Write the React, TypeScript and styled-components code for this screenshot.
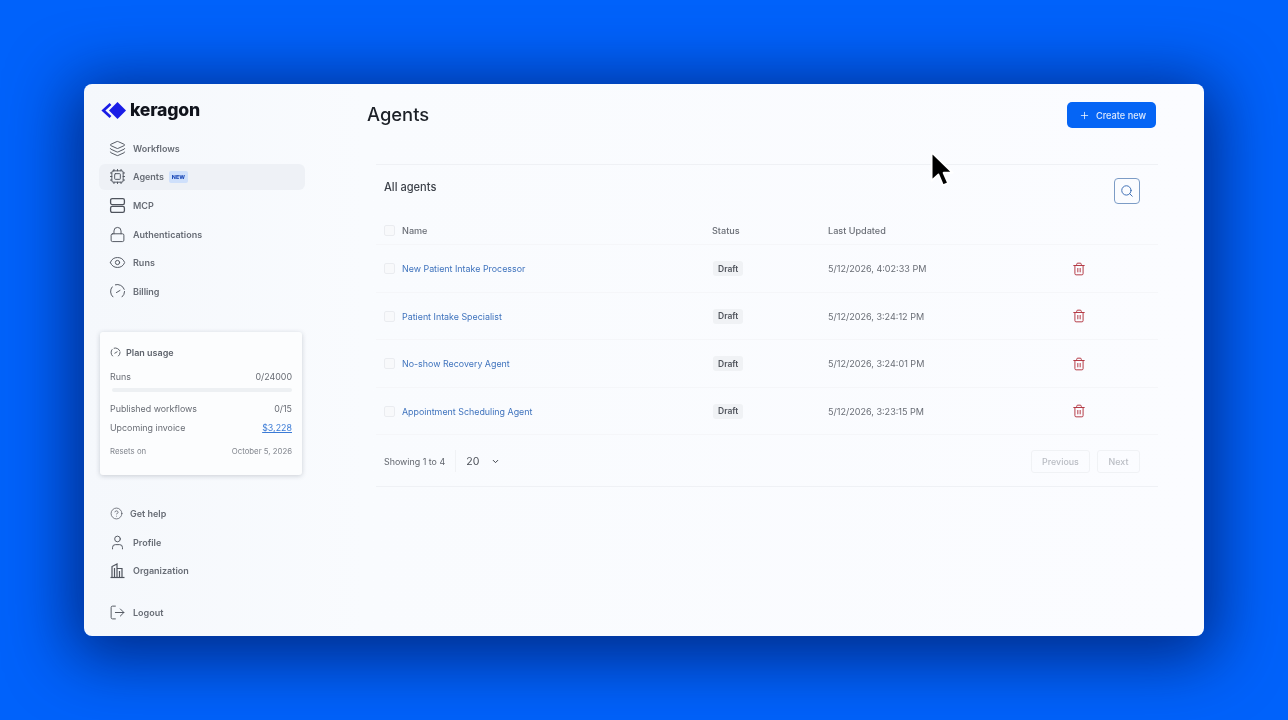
import React from 'react';
import styled, { createGlobalStyle } from 'styled-components';
import {
  ChevronDown,
  CircleHelp,
  Cpu,
  Eye,
  Layers,
  Lock,
  LogOut,
  Plus,
  Search,
  Trash2,
  User,
} from 'lucide-react';

const GlobalStyle = createGlobalStyle`
  html, body {
    margin: 0;
    padding: 0;
    height: 100%;
    background: #0062fb;
    font-family: Inter, "Liberation Sans", sans-serif;
    overflow: hidden;
  }
`;

const Stage = styled.div`
  position: relative;
  width: 1288px;
  height: 720px;
  display: flex;
  align-items: center;
  justify-content: center;
  background: #0062fb;
`;

const Window = styled.div`
  width: 1120px;
  height: 552px;
  display: flex;
  border-radius: 8px;
  overflow: hidden;
  background: linear-gradient(90deg, #f5f8fc 0%, #f9fbfe 25%, #fbfcff 100%);
  box-shadow: 0 10px 64px 12px rgba(0, 22, 90, 0.72);
`;

const Sidebar = styled.aside`
  width: 240px;
  flex: none;
  box-sizing: border-box;
  padding: 16px 19px 0 15px;
  display: flex;
  flex-direction: column;
  filter: blur(0.3px);
`;

const LogoRow = styled.div`
  height: 20px;
  display: flex;
  align-items: center;
  gap: 4px;
  padding-left: 2px;
`;

const LogoText = styled.span`
  margin-top: -2px;
  font-size: 17.6px;
  font-weight: 800;
  color: #10131c;
  letter-spacing: -0.2px;
`;

const Nav = styled.nav<{ $top: number }>`
  display: flex;
  flex-direction: column;
  gap: 2.6px;
  margin-top: ${p => p.$top}px;
`;

const NavItem = styled.a<{ $active?: boolean; $tight?: boolean }>`
  height: 26px;
  display: flex;
  align-items: center;
  gap: 7px;
  padding-left: ${p => (p.$tight ? 11 : 10)}px;
  border-radius: 6px;
  font-size: 9px;
  font-weight: 600;
  color: #676c75;
  background: ${p => (p.$active ? '#eef1f6' : 'transparent')};

  svg {
    flex: none;
    color: #4f545d;
  }
`;

const NewBadge = styled.span`
  width: 19px;
  height: 12px;
  margin-left: -2px;
  display: flex;
  align-items: center;
  justify-content: center;
  border-radius: 2px;
  background: #cfe0fb;
  color: #1d4ab8;
  font-size: 5.4px;
  font-weight: 800;
`;

const PlanCard = styled.section`
  width: 202px;
  height: 143px;
  box-sizing: border-box;
  margin: 27.6px 0 0 1px;
  padding: 15px 10px 0;
  border-radius: 3px;
  background: #fcfdfe;
  box-shadow: 0 1px 5px rgba(40, 50, 70, 0.22);
`;

const PlanTitle = styled.div`
  display: flex;
  align-items: center;
  gap: 5px;
  height: 12px;
  font-size: 9px;
  font-weight: 600;
  color: #5f646d;

  svg {
    color: #4f545d;
  }
`;

const PlanRow = styled.div<{ $top: number; $small?: boolean }>`
  display: flex;
  align-items: center;
  justify-content: space-between;
  height: 12px;
  margin-top: ${p => p.$top}px;
  font-size: ${p => (p.$small ? 7.8 : 8.9)}px;
  color: ${p => (p.$small ? '#82868e' : '#686c74')};
`;

const UsageBar = styled.div`
  height: 4px;
  margin: 5px 0 0 2px;
  border-radius: 2px;
  background: #edf0f3;
`;

const InvoiceLink = styled.span`
  color: #3b7bd6;
  text-decoration: underline;
`;

const Main = styled.main`
  flex: 1;
  min-width: 0;
  box-sizing: border-box;
  padding: 18px 48px 0 43px;
  filter: blur(0.3px);
`;

const PageHeader = styled.header`
  height: 26px;
  display: flex;
  align-items: center;
  justify-content: space-between;
`;

const PageTitle = styled.h1`
  margin: -2px 0 0;
  font-size: 18.4px;
  font-weight: 500;
  color: #1c2027;
`;

const CreateButton = styled.button`
  width: 89px;
  height: 26px;
  display: flex;
  align-items: center;
  justify-content: center;
  gap: 6px;
  padding: 0 0 0 2px;
  border: none;
  border-radius: 5px;
  background: #0565f5;
  color: #dbe8fd;
  font-family: inherit;
  font-size: 9.2px;
  font-weight: 500;

  svg {
    color: #fff;
  }
`;

const AgentsCard = styled.section`
  height: 323px;
  box-sizing: border-box;
  margin: 36px -2px 0 9px;
  border-top: 1px solid #eff1f5;
  border-bottom: 1px solid #eff1f5;
`;

const CardHeader = styled.div`
  display: flex;
  align-items: center;
  justify-content: space-between;
  padding: 13px 18px 13px 8px;
`;

const CardTitle = styled.h2`
  margin: 0 0 8px;
  font-size: 11.1px;
  font-weight: 500;
  color: #3e434b;
`;

const SearchButton = styled.button`
  width: 26px;
  height: 26px;
  display: flex;
  align-items: center;
  justify-content: center;
  padding: 0;
  border: 1px solid #7c9cc6;
  border-radius: 4px;
  background: transparent;
  color: #3f6fb5;
`;

const Row = styled.div<{ $head?: boolean }>`
  display: grid;
  grid-template-columns: 18px 310px 116px 244px 14px;
  align-items: center;
  height: ${p => (p.$head ? '28px' : '47.5px')};
  box-sizing: border-box;
  padding: ${p => (p.$head ? '0' : '1px')} 0 0 8px;
  border-bottom: 1px solid #f5f6f9;
  font-size: ${p => (p.$head ? 9.1 : 8.9)}px;
  color: #6a6e76;
  font-weight: ${p => (p.$head ? 500 : 400)};
`;

const Checkbox = styled.span`
  width: 9px;
  height: 9px;
  border: 1px solid #eaecf0;
  border-radius: 2px;
  background: #f8f9fb;
`;

const AgentName = styled.a`
  color: #3f73bd;
`;

const DraftBadge = styled.span`
  justify-self: start;
  margin-left: 1px;
  padding: 2.5px 5px;
  border-radius: 3px;
  background: #f0f2f5;
  color: #51555d;
  font-size: 8.5px;
  line-height: 10px;
  font-weight: 600;
`;

const UpdatedAt = styled.span`
  font-size: 9.05px;
`;

const DeleteIcon = styled(Trash2)`
  color: #b43a45;
`;

const Footer = styled.div`
  height: 51px;
  display: flex;
  align-items: center;
  box-sizing: border-box;
  padding: 1px 18px 0 8px;
  font-size: 8.9px;
  color: #62666e;
`;

const PageSize = styled.div`
  display: flex;
  align-items: center;
  gap: 12px;
  height: 22px;
  margin-left: 10px;
  padding-left: 10px;
  border-left: 1px solid #f0f2f5;
  font-size: 10.6px;
  color: #4c5058;

  svg {
    color: #3b3f47;
  }
`;

const Pager = styled.div`
  display: flex;
  gap: 7px;
  margin-left: auto;
`;

const PagerButton = styled.button<{ $width: number }>`
  width: ${p => p.$width}px;
  height: 23px;
  padding: 0;
  border: 1px solid #f0f2f5;
  border-radius: 3px;
  background: transparent;
  color: #b9bcc3;
  font-family: inherit;
  font-size: 8.9px;
  font-weight: 500;
`;

// sits over the page, it was part of the recording
const Cursor = styled.svg`
  position: absolute;
  left: 929px;
  top: 150px;
`;

const LogoMark = () => (
  <svg width="25" height="17" viewBox="0 0 25 17" fill="#1a1de6">
    <path d="M8.6 1 L0.4 8.5 L8.6 16 L10.4 14 L4.4 8.5 L10.4 3 Z" />
    <path d="M16.5 0 L25 8.5 L16.5 17 L8 8.5 Z" />
  </svg>
);

const McpIcon = () => (
  <svg width="17" height="17" viewBox="0 0 17 17" fill="none" stroke="currentColor" strokeWidth="1.3">
    <rect x="1.6" y="1.6" width="13.8" height="6" rx="1.6" />
    <rect x="1.6" y="9.4" width="13.8" height="6" rx="1.6" />
  </svg>
);

const GaugeIcon = ({ size, stroke }: { size: number; stroke: number }) => (
  <svg width={size} height={size} viewBox="0 0 24 24" fill="none" stroke="currentColor" strokeWidth={stroke} strokeLinecap="round">
    <path d="M9 2.5 A10 10 0 0 1 21.5 9" />
    <path d="M22 12 A10 10 0 0 1 18.5 19.6" />
    <path d="M5.5 19.6 A10 10 0 0 1 4.5 5.5" />
    <path d="M10.5 13.5 L15.5 10.5" />
  </svg>
);

const OrgIcon = () => (
  <svg width="17" height="17" viewBox="0 0 17 17" fill="none" stroke="currentColor" strokeWidth="1.2">
    <path d="M1.5 15.5 H15.5" />
    <path d="M3 15.5 V4.5 L8 2 V15.5" />
    <path d="M8 6.5 H13 V15.5" />
    <path d="M5.5 6 V15.5 M10.5 9 V15.5" />
  </svg>
);

const CursorIcon = () => (
  <Cursor width="28" height="41" viewBox="0 0 24 36">
    <path d="M2 2 V27 L8 21.5 L12 31 L16.5 29 L12.5 20 H20.5 Z" fill="#000" stroke="#fff" strokeWidth="1.6" strokeLinejoin="round" />
  </Cursor>
);

const topNav = [
  { label: 'Workflows', icon: <Layers size={17} strokeWidth={1.35} /> },
  { label: 'Agents', icon: <Cpu size={17} strokeWidth={1.35} />, active: true },
  { label: 'MCP', icon: <McpIcon /> },
  { label: 'Authentications', icon: <Lock size={17} strokeWidth={1.35} /> },
  { label: 'Runs', icon: <Eye size={17} strokeWidth={1.35} /> },
  { label: 'Billing', icon: <GaugeIcon size={17} stroke={1.35} /> },
];

const agents = [
  { name: 'New Patient Intake Processor', updated: '5/12/2026, 4:02:33 PM' },
  { name: 'Patient Intake Specialist', updated: '5/12/2026, 3:24:12 PM' },
  { name: 'No-show Recovery Agent', updated: '5/12/2026, 3:24:01 PM' },
  { name: 'Appointment Scheduling Agent', updated: '5/12/2026, 3:23:15 PM' },
];

export default function App() {
  return (
    <Stage>
      <GlobalStyle />
      <Window>
        <Sidebar>
          <LogoRow>
            <LogoMark />
            <LogoText>keragon</LogoText>
          </LogoRow>
          <Nav $top={15.4}>
            {topNav.map(item => (
              <NavItem key={item.label} $active={item.active}>
                {item.icon}
                {item.label}
                {item.active && <NewBadge>NEW</NewBadge>}
              </NavItem>
            ))}
          </Nav>
          <PlanCard>
            <PlanTitle>
              <GaugeIcon size={11} stroke={2} />
              Plan usage
            </PlanTitle>
            <PlanRow $top={12}>
              <span>Runs</span>
              <span>0/24000</span>
            </PlanRow>
            <UsageBar />
            <PlanRow $top={11}>
              <span>Published workflows</span>
              <span>0/15</span>
            </PlanRow>
            <PlanRow $top={7}>
              <span>Upcoming invoice</span>
              <InvoiceLink>$3,228</InvoiceLink>
            </PlanRow>
            <PlanRow $top={11} $small>
              <span>Resets on</span>
              <span>October 5, 2026</span>
            </PlanRow>
          </PlanCard>
          <Nav $top={25.6}>
            <NavItem $tight>
              <CircleHelp size={13} strokeWidth={1.35} />
              Get help
            </NavItem>
            <NavItem>
              <User size={17} strokeWidth={1.35} />
              Profile
            </NavItem>
            <NavItem>
              <OrgIcon />
              Organization
            </NavItem>
          </Nav>
          <Nav $top={15.4}>
            <NavItem>
              <LogOut size={17} strokeWidth={1.35} />
              Logout
            </NavItem>
          </Nav>
        </Sidebar>
        <Main>
          <PageHeader>
            <PageTitle>Agents</PageTitle>
            <CreateButton>
              <Plus size={11} strokeWidth={1.6} />
              Create new
            </CreateButton>
          </PageHeader>
          <AgentsCard>
            <CardHeader>
              <CardTitle>All agents</CardTitle>
              <SearchButton>
                <Search size={14} strokeWidth={1.7} />
              </SearchButton>
            </CardHeader>
            <Row $head>
              <Checkbox />
              <span>Name</span>
              <span>Status</span>
              <span>Last Updated</span>
              <span />
            </Row>
            {agents.map(agent => (
              <Row key={agent.name}>
                <Checkbox />
                <AgentName>{agent.name}</AgentName>
                <DraftBadge>Draft</DraftBadge>
                <UpdatedAt>{agent.updated}</UpdatedAt>
                <DeleteIcon size={14} strokeWidth={1.7} />
              </Row>
            ))}
            <Footer>
              Showing 1 to 4
              <PageSize>
                20
                <ChevronDown size={9} strokeWidth={2.6} />
              </PageSize>
              <Pager>
                <PagerButton $width={59}>Previous</PagerButton>
                <PagerButton $width={43}>Next</PagerButton>
              </Pager>
            </Footer>
          </AgentsCard>
        </Main>
      </Window>
      <CursorIcon />
    </Stage>
  );
}
